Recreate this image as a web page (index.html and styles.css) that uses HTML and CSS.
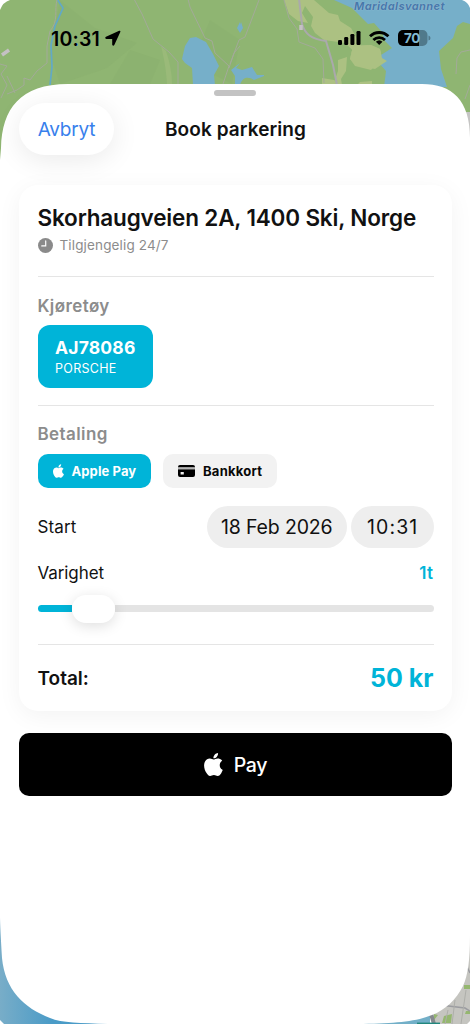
FILE: index.html
```html
<!DOCTYPE html>
<html lang="no">
<head>
<meta charset="utf-8">
<title>Book parkering</title>
<link rel="stylesheet" href="styles.css">
</head>
<body>
<div class="screen">
  <svg class="backdrop" viewBox="0 0 470 1024" aria-hidden="true">
    <defs>
      <linearGradient id="shore" x1="0" y1="0" x2="1" y2="0"><stop offset="0" stop-color="#78adc8"/><stop offset=".4" stop-color="#4a9bc7"/></linearGradient>
    </defs>
    <rect width="470" height="512" fill="#8fb572"/>
    <path fill="#89af6d" opacity=".5" d="M60 0l35 28 42 15-30 25-47 16-10-30zM210 20l30 20-8 44-40-20zM130 50l30 10-10 24h-40z"/>
    <path fill="#9aba79" d="M161 46l5 5c4 12 6 23 6 33h-5c-1-15-3-26-6-38z"/>
    <path fill="#acc182" d="M284 0h30l15 13 9 2 2 6 11 7 9 16 6 10-6 3-15-14-21-3-9-7-4-7 2-9-8-11-3 7 6 10-10-2-9-7zM371 45l9 4 2 9-11 12-16-4-5-7 3-13zM338 60l9-3-1 14-5 8 1 6h-9l5-14zM322 78l12 2 4 6h-16zM360 82l12-1v4h-15z"/>
    <path fill="#76afc9" d="M334 0h136v24l-7-2-6 4-4 12-14 13 2 18 6 18h-63l2-16-7-8 2-8 11-7-7-7-3-9-8-9-6 1-16-16z"/>
    <path fill="#acc182" d="M371 45l9 4 2 9 5 3-12 8-16-3-9-7 3-13z"/>
    <path fill="#76afc9" d="M196 37l10 5 7 12 6 12-5 9 1 10h-22l-1-17-7-5-3-4 3-13 5-8zM240 63l-9 7 4 6v9h5c3-9 9-8 14-5l10-4v-1h-7l-5-8-10 3-6-2zM240 22l-3 6 3 5zM241 22l-2 6 1 5 3-5z"/>
    <path fill="none" stroke="#62a9c6" stroke-width="1.700" d="M57-1l6 9-8 18-4 19 1 22-2 18"/>
    <circle cx="76.500" cy="44.500" r="1.500" fill="#62a9c6"/>
    <g fill="none" stroke="#a3aa99" stroke-width="1">
      <path d="M57 0c-3 10 2 21-7 31l-3 15v17l-10 8-7 9-6-2v7l-7 5-10 4"/>
      <path d="M134-1l8 15 11 25 16 13 9 10v22M188-1l2 8 15 31 7 3 3 12 14 13-6 18M229 68l5-15 6-7M259 0l-14 37-6 3-9 24"/>
      <path d="M284 0l5 18 8 11 2 13 16 6 8 11 1 24M470 50l-9 2-4 6-1 16M470 85l-5 14M0 64l7 2-6 8 6 11-6 13M7 76l8 17"/>
    </g>
    <path fill="none" stroke="#aaa9ac" stroke-width="2" d="M299-1l3 25c3 10 9 15 24 17l7 24 4 20"/>
    <path fill="none" stroke="#c5c1c4" stroke-width="3.500" d="M2 55l7-5M301 25v5"/>
    <path fill="#c5c5c4" d="M466 112h4v912h-4z"/>
    <rect y="900" width="130" height="124" fill="url(#shore)"/>
    <path fill="#72afc8" d="M350 1010h80v14h-80z"/>
    <path fill="#c5c5c0" d="M432 1010l38-70v84h-38z"/>
    <path fill="#95b76f" d="M444 1016l8-2-1 9h-9zM434 1014l4 1-4 5zM464 985h6v4h-6zM466 1011h4v3h-5z"/>
    <path fill="none" stroke="#85898e" stroke-width="4" d="M431 1014l3 10"/>
    <path fill="none" stroke="#9b9ca0" stroke-width="1.500" d="M440 1005l25 3 5 3M466 965l4 8"/>
    <path fill="none" stroke="#adaea9" d="M455 1000l-3 24M466 990l-5 34M448 1010l-3 14"/>
    <path fill="#21877d" d="M417 1022.600h23v1.400h-23z"/>
    <path fill="#fff" d="M0 915V160L1 148C2 109 20 84 68 84H422C452 84 470 100 470 138V935C470 960 468 975 463 986C456 1000 445 1010 432 1015C415 1022 395 1023 363 1024H108C80 1023 62 1023 50 1018C24 1008 5 990 2 958C1 940 0 925 0 915Z"/>
    <path fill="#fff" d="M0 0h10Q3 2 0 10zM470 0h-8q6 2 8 8zM0 1024v-4l4 4zM470 1024v-3l-3 3z"/>
  </svg>
  <div class="lake">Maridalsvannet</div>

  <header class="status">
    <div class="clock">10:31</div>
    <svg class="arrow" viewBox="0 0 16 16"><path d="M14.200 .8L1 6.700C-.2 7.300.1 8.900 1.400 8.900H7.200V14.600c0 1.300 1.500 1.600 2.100.4L15.300 2c.4-.9-.2-1.600-1.100-1.200z"/></svg>
    <svg class="signals" viewBox="0 0 94 18">
      <rect x="1" y="11" width="4" height="5" rx="1.200"/><rect x="7.200" y="8" width="4" height="8" rx="1.200"/><rect x="13.400" y="5" width="4" height="11" rx="1.200"/><rect x="19.500" y="2" width="4" height="14" rx="1.200"/>
      <g fill="none" stroke="#000" stroke-width="2.800"><path d="M33 7.300a13 13 0 0 1 18.400 0M36.400 11a8.200 8.200 0 0 1 11.600 0"/></g>
      <path d="M42.200 16l-3.300-3.300a4.800 4.800 0 0 1 6.600 0z"/>
      <path d="M66 1h16v16H66a5 5 0 0 1-5-5V6a5 5 0 0 1 5-5z"/><path fill="#50798b" d="M82 1h3.500a5 5 0 0 1 5 5v6a5 5 0 0 1-5 5H82zM91.500 6.500q2 .5 2 2.500t-2 2.500z"/>
      <text x="67" y="13.800" class="charge">70</text>
    </svg>
  </header>

  <div class="grabber"></div>
  <nav class="nav">
    <button class="cancel"><span>Avbryt</span></button>
    <h1 class="heading">Book parkering</h1>
  </nav>

  <main class="card">
    <h2 class="address">Skorhaugveien 2A, 1400 Ski, Norge</h2>
    <div class="hours">
      <svg class="hours-icon" viewBox="0 0 14 14"><circle cx="7" cy="7" r="7" fill="#8a8a8a"/><path fill="none" stroke="#fff" stroke-width="1.100" stroke-linecap="round" d="M7.200 2.700v4.700H3.500"/></svg>
      <span>Tilgjengelig 24/7</span>
    </div>
    <hr class="rule first">
    <h3 class="label vehicle-label">Kjøretøy</h3>
    <button class="vehicle"><b class="plate">AJ78086</b><span class="make">PORSCHE</span></button>
    <hr class="rule second">
    <h3 class="label payment-label">Betaling</h3>
    <div class="methods">
      <button class="method active">
        <svg class="apple-small" viewBox="2.2 0 19.700 24"><path d="M12.152 6.896c-.948 0-2.415-1.078-3.960-1.040-2.040.027-3.910 1.183-4.961 3.014-2.117 3.675-.546 9.103 1.519 12.090 1.013 1.454 2.208 3.090 3.792 3.039 1.520-.065 2.090-.987 3.935-.987 1.831 0 2.350.987 3.960.948 1.637-.026 2.676-1.480 3.676-2.948 1.156-1.688 1.636-3.325 1.662-3.415-.039-.013-3.182-1.221-3.220-4.857-.026-3.040 2.480-4.494 2.597-4.559-1.429-2.090-3.623-2.324-4.390-2.376-2-.156-3.675 1.090-4.610 1.090zM15.530 3.830c.843-1.012 1.400-2.427 1.245-3.830-1.207.052-2.662.805-3.532 1.818-.780.896-1.454 2.338-1.273 3.714 1.338.104 2.715-.688 3.559-1.701"/></svg>
        <span>Apple Pay</span>
      </button>
      <button class="method other">
        <svg class="bank" viewBox="0 0 17 12"><path fill-rule="evenodd" d="M2 0h13a2 2 0 0 1 2 2v.4H0V2a2 2 0 0 1 2-2zM0 4.200h17V10a2 2 0 0 1-2 2H2a2 2 0 0 1-2-2zM2.600 7v2.600h3.200V7z"/><path fill="#b4b4b4" d="M0 2.400h17v1.800H0z"/></svg>
        <span>Bankkort</span>
      </button>
    </div>
    <div class="start"><span class="start-text">Start</span><div class="pills"><span class="pill date"><span>18 Feb 2026</span></span><span class="pill time"><span>10:31</span></span></div></div>
    <div class="duration"><span class="duration-text">Varighet</span><span class="duration-value">1t</span></div>
    <div class="slider"><div class="filled"></div><div class="thumb"></div><div class="track"></div></div>
    <hr class="rule third">
    <div class="total"><span class="total-text">Total:</span><span class="price">50 kr</span></div>
  </main>
  <button class="pay">
    <svg class="apple-large" viewBox="2.2 0 19.700 24"><path d="M12.152 6.896c-.948 0-2.415-1.078-3.960-1.040-2.040.027-3.910 1.183-4.961 3.014-2.117 3.675-.546 9.103 1.519 12.090 1.013 1.454 2.208 3.090 3.792 3.039 1.520-.065 2.090-.987 3.935-.987 1.831 0 2.350.987 3.960.948 1.637-.026 2.676-1.480 3.676-2.948 1.156-1.688 1.636-3.325 1.662-3.415-.039-.013-3.182-1.221-3.220-4.857-.026-3.040 2.480-4.494 2.597-4.559-1.429-2.090-3.623-2.324-4.390-2.376-2-.156-3.675 1.090-4.610 1.090zM15.530 3.830c.843-1.012 1.400-2.427 1.245-3.830-1.207.052-2.662.805-3.532 1.818-.780.896-1.454 2.338-1.273 3.714 1.338.104 2.715-.688 3.559-1.701"/></svg>
    <span>Pay</span>
  </button>
</div>
</body>
</html>
```
FILE: styles.css
```css
* { box-sizing: border-box; }
body, h1, h2, h3, hr { margin: 0; }
body { background: #fff; font-family: Inter, "Noto Sans", sans-serif; color: #111; }
button { border: 0; padding: 0; font: inherit; color: inherit; }
span, h1, h2, h3, b { white-space: nowrap; }

.screen { position: relative; isolation: isolate; width: 470px; height: 1024px; overflow: hidden; }
.backdrop { position: absolute; inset: 0; z-index: -1; width: 470px; height: 1024px; }
.lake { position: absolute; left: 354px; top: 0; font: italic 700 11px/13px Inter, sans-serif; letter-spacing: .4px; color: #4879ab; text-shadow: 0 0 1px #b5cee0; }

.status { display: flex; height: 84px; padding: 29px 0 0 51px; }
.clock { width: 54px; font-size: 19.5px; font-weight: 600; line-height: 20px; letter-spacing: .2px; color: #000; }
.arrow { width: 16px; height: 16px; margin-top: 1px; }
.signals { width: 94px; height: 18px; margin-left: 216px; }
.charge { font: 700 13.5px Inter, sans-serif; fill: #82b9d0; letter-spacing: -.4px; }

.grabber { width: 42px; height: 6px; margin: 6px auto 0; border-radius: 3px; background: #c3c3c3; }
.nav { display: flex; align-items: center; height: 52px; margin: 7px 0 30px 19px; }
.cancel { width: 95px; height: 52px; border-radius: 26px; background: #fff; color: #3880ec; font-size: 19px; letter-spacing: -.2px; box-shadow: 0 5px 28px rgb(0 0 0 / .085); }
.heading { margin: 2px 0 0 51px; font-size: 19px; font-weight: 600; line-height: 24px; letter-spacing: .08px; }

.card { display: flex; flex-direction: column; width: 433px; height: 526px; margin: 0 0 22px 19px; padding: 18px 18px 0 18.5px; border-radius: 19px; background: #fff; box-shadow: 0 5px 24px rgb(0 0 0 / .052); }
.address { height: 30px; font-size: 22.5px; font-weight: 600; line-height: 30px; letter-spacing: -.17px; }
.hours { display: flex; align-items: center; gap: 7px; height: 24px; font-size: 13.5px; letter-spacing: .14px; color: #8c8c8c; }
.hours-icon { width: 15px; height: 15px; }
.rule { width: 396px; height: 1px; border: 0; background: #e5e5e5; }
.first { margin-top: 19px; }
.second { margin-top: 17px; }
.third { height: 1px; margin-top: 21.500px; }
.label { height: 24px; font-size: 17px; font-weight: 600; line-height: 24px; letter-spacing: .4px; color: #8c8c8c; }
.vehicle-label { margin-top: 17px; }
.payment-label { margin-top: 16px; }
.vehicle { display: flex; flex-direction: column; align-items: flex-start; width: 115.500px; height: 63px; margin-top: 7px; padding: 12px 0 0 17.500px; border-radius: 12px; background: #00b4d8; color: #fff; }
.plate { font-size: 17.5px; font-weight: 700; line-height: 22px; letter-spacing: .18px; }
.make { font-size: 12.5px; line-height: 18px; letter-spacing: .3px; padding-top: 1px; }
.methods { display: flex; gap: 12px; margin-top: 8px; }
.method { display: flex; align-items: center; width: 114px; height: 34px; padding-left: 15px; border-radius: 10px; background: #f2f2f2; color: #080808; font-size: 13px; font-weight: 700; }
.active { width: 113.500px; background: #00b4d8; color: #fff; letter-spacing: .1px; }
.other { letter-spacing: .25px; }
.apple-small { width: 11px; height: 14px; margin-right: 8px; fill: currentColor; }
.bank { width: 17px; height: 12px; margin-right: 8px; }
.start, .duration, .total { display: flex; align-items: center; justify-content: space-between; width: 396px; }
.start { height: 42px; margin-top: 18px; font-size: 17px; }
.start-text { letter-spacing: .1px; }
.pills { display: flex; gap: 4px; }
.pill { display: flex; align-items: center; justify-content: center; height: 42px; border-radius: 21px; background: #eee; font-size: 19.5px; }
.date { width: 140.500px; letter-spacing: -.15px; }
.time { width: 82.500px; padding-left: 1px; letter-spacing: 1.1px; }
.duration { height: 24px; margin-top: 13px; font-size: 17px; }
.duration-text { letter-spacing: -.08px; }
.duration-value { font-weight: 600; letter-spacing: .4px; color: #00b4d8; }
.slider { display: flex; align-items: center; width: 396px; height: 28px; margin-top: 9.500px; }
.filled { width: 34px; height: 7px; border-radius: 4px 0 0 4px; background: #00b4d8; }
.thumb { z-index: 1; width: 43px; height: 28px; border-radius: 14px; background: #fff; box-shadow: 0 3px 14px rgb(0 0 0 / .13); }
.track { width: 319px; height: 7px; border-radius: 0 4px 4px 0; background: #e4e4e4; }
.total { height: 32px; margin-top: 17px; }
.total-text { font-size: 19px; font-weight: 600; }
.price { font-size: 25px; font-weight: 700; color: #00b4d8; }
.pay { display: flex; align-items: center; justify-content: center; gap: 11px; width: 433px; height: 63px; margin-left: 19px; border-radius: 10px; background: #000; color: #fff; font-size: 19.5px; font-weight: 500; letter-spacing: -.3px; }
.apple-large { width: 19px; height: 23px; fill: currentColor; }
```
